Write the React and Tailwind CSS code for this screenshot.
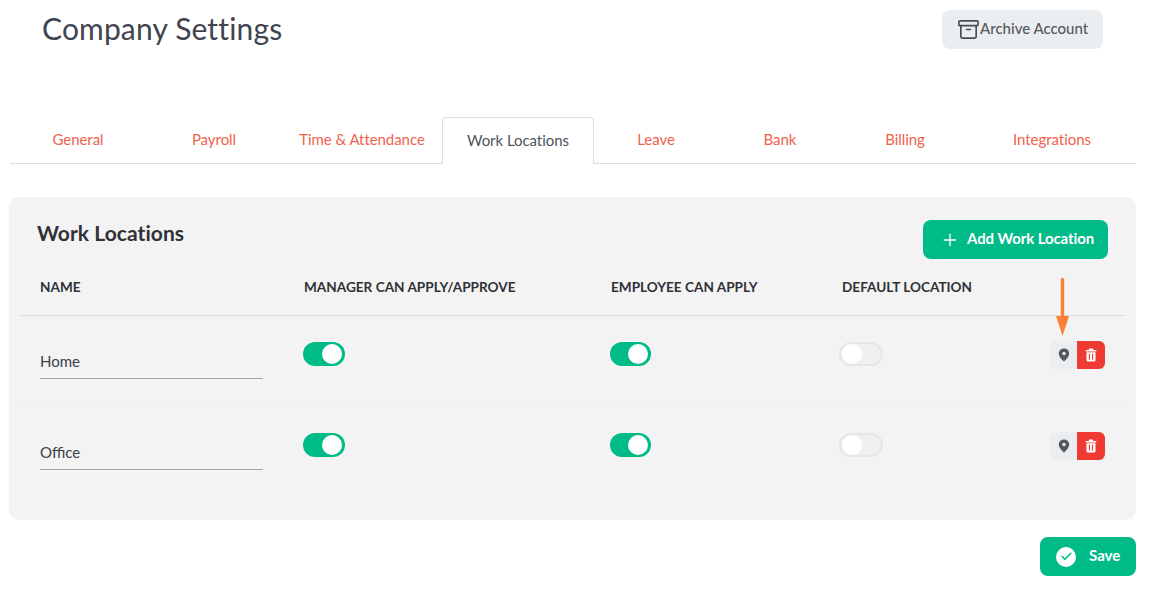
import React from 'react';
import { Plus, Archive, Check } from 'lucide-react';

const tabs = [
  { label: 'General', width: 'w-[136px]' },
  { label: 'Payroll', width: 'w-[136px]' },
  { label: 'Time & Attendance', width: 'w-[160px]' },
  { label: 'Work Locations', width: 'w-[152px]', active: true },
  { label: 'Leave', width: 'w-[124px]' },
  { label: 'Bank', width: 'w-[124px]' },
  { label: 'Billing', width: 'w-[126px]' },
  { label: 'Integrations', width: 'w-[168px]' },
];

const locations = ['Home', 'Office'];

const PinIcon = () => (
  <svg width="12" height="14" viewBox="0 0 12 14">
    <path
      fillRule="evenodd"
      d="M6 0.5C2.9 0.5 0.8 2.8 0.8 5.5C0.8 8.6 4 11.6 6 13.5C8 11.6 11.2 8.6 11.2 5.5C11.2 2.8 9.1 0.5 6 0.5ZM6 3.8A1.7 1.7 0 1 1 6 7.2A1.7 1.7 0 1 1 6 3.8Z"
      fill="#55585c"
    />
  </svg>
);

const TrashIcon = () => (
  <svg width="12" height="14" viewBox="0 0 12 14">
    <path
      fillRule="evenodd"
      d="M4.2 0.5H7.8L8.4 2H11.3V3.4H0.7V2H3.6ZM1.5 4.3H10.5V12C10.5 12.9 9.9 13.5 9 13.5H3C2.1 13.5 1.5 12.9 1.5 12ZM3.9 5.8V11.8H5V5.8ZM7 5.8V11.8H8.1V5.8Z"
      fill="#ffffff"
    />
  </svg>
);

const Toggle = ({ on, width }) => (
  <div
    className={`flex items-center ${width} h-[24px] rounded-full px-[3px] ${
      on
        ? 'bg-[#00ba88] justify-end'
        : 'bg-[#f0f0f0] border-2 border-[#e6e6e6] justify-start pl-[1px]'
    }`}
  >
    <span className="block w-[20px] h-[20px] rounded-full bg-white" />
  </div>
);

const Row = ({ name, last }) => (
  <div className={`flex items-start h-[91px] px-[20px] ${last ? '' : 'border-b border-[#f0f0f0]'}`}>
    <div className="w-[264px] pt-[32px]">
      <div className="w-[223px] h-[31px] border-b border-[#a8a8a8] text-[15px] leading-[26px] text-[#3a3f4a]">{name}</div>
    </div>
    <div className="w-[308px] pt-[26px] -ml-[1px]"><Toggle on width="w-[42px]" /></div>
    <div className="w-[229px] pt-[26px]"><Toggle on width="w-[41px]" /></div>
    <div className="w-[211px] pt-[26px]"><Toggle width="w-[44px]" /></div>
    <div className="pt-[25px]">
      <div className="flex h-[28px]">
        <div className="flex items-center justify-center w-[27px] bg-[#ebeef0] rounded-l-[6px]">
          <PinIcon />
        </div>
        <div className="flex items-center justify-center w-[28px] bg-[#ee3a33] rounded-r-[6px]">
          <TrashIcon />
        </div>
      </div>
    </div>
  </div>
);

export default function App() {
  return (
    <div className="relative w-[1149px] h-[592px] bg-white font-['Lato','Noto_Sans',sans-serif] overflow-hidden">
      {/* Header */}
      <div className="flex justify-between items-start h-[117px] pl-[42px] pr-[46px] pt-[10px]">
        <h1 className="text-[30px] leading-[36px] tracking-[0.15px] text-[#3f4450]">Company Settings</h1>
        <button className="flex items-center w-[161px] h-[39px] pl-[15px] bg-[#ebeef0] rounded-[8px] text-[15px] font-medium text-[#55585f]">
          <Archive size={23} strokeWidth={1.7} className="text-[#4a4c50]" />
          <span className="-mt-[2px]">Archive Account</span>
        </button>
      </div>

      {/* Tabs */}
      <div className="flex ml-[10px] w-[1126px] h-[47px] border-b border-[#dedede]">
        {tabs.map(tab => (
          <div
            key={tab.label}
            className={`${tab.width} h-[47px] flex items-center justify-center pb-[2px] text-[15px] tracking-[-0.05px] ${
              tab.active
                ? 'bg-white border border-b-0 border-[#dedede] rounded-t-[4px] text-[#4f5560]'
                : 'text-[#f0624d]'
            }`}
          >
            {tab.label}
          </div>
        ))}
      </div>

      {/* Card */}
      <div className="ml-[9px] mt-[33px] w-[1127px] h-[323px] bg-[#f3f3f3] rounded-[10px] px-[11px]">
        <div className="flex justify-between items-start pt-[23px] px-[17px] h-[62px]">
          <h2 className="text-[21px] leading-[26px] tracking-[0.05px] font-bold text-[#2f3136]">Work Locations</h2>
          <button className="flex items-center h-[39px] w-[185px] pl-[17px] bg-[#00ba88] rounded-[8px] text-[15px] tracking-[-0.1px] font-bold text-white">
            <Plus size={20} strokeWidth={1.6} className="mr-[7px]" />
            <span className="-mt-[2px]">Add Work Location</span>
          </button>
        </div>
        <div className="flex items-center h-[57px] pl-[20px] border-b border-[#dcdcdc] text-[13.6px] font-bold text-[#2f3136]">
          <div className="w-[264px]">NAME</div>
          <div className="w-[307px]">MANAGER CAN APPLY/APPROVE</div>
          <div className="w-[231px]">EMPLOYEE CAN APPLY</div>
          <div>DEFAULT LOCATION</div>
        </div>
        {locations.map((name, i) => (
          <Row key={name} name={name} last={i === locations.length - 1} />
        ))}
      </div>

      {/* Save */}
      <div className="flex justify-end mt-[17px] pr-[13px]">
        <button className="flex items-center w-[96px] h-[39px] pl-[16px] bg-[#00ba88] rounded-[8px] text-[15px] font-bold text-white">
          <span className="flex items-center justify-center w-[20px] h-[20px] rounded-full bg-white mr-[13px]">
            <Check size={13} strokeWidth={3} className="text-[#00ba88]" />
          </span>
          <span className="-mt-[3px]">Save</span>
        </button>
      </div>

      {/* Annotation arrow */}
      <svg className="absolute left-[1053px] top-[276px]" width="20" height="62" viewBox="0 0 20 62">
        <path d="M9.5 3.5V42" stroke="#fb7f38" strokeWidth="3.4" strokeLinecap="round" />
        <path d="M3 40H16L9.5 60Z" fill="#fb7f38" />
      </svg>
    </div>
  );
}
